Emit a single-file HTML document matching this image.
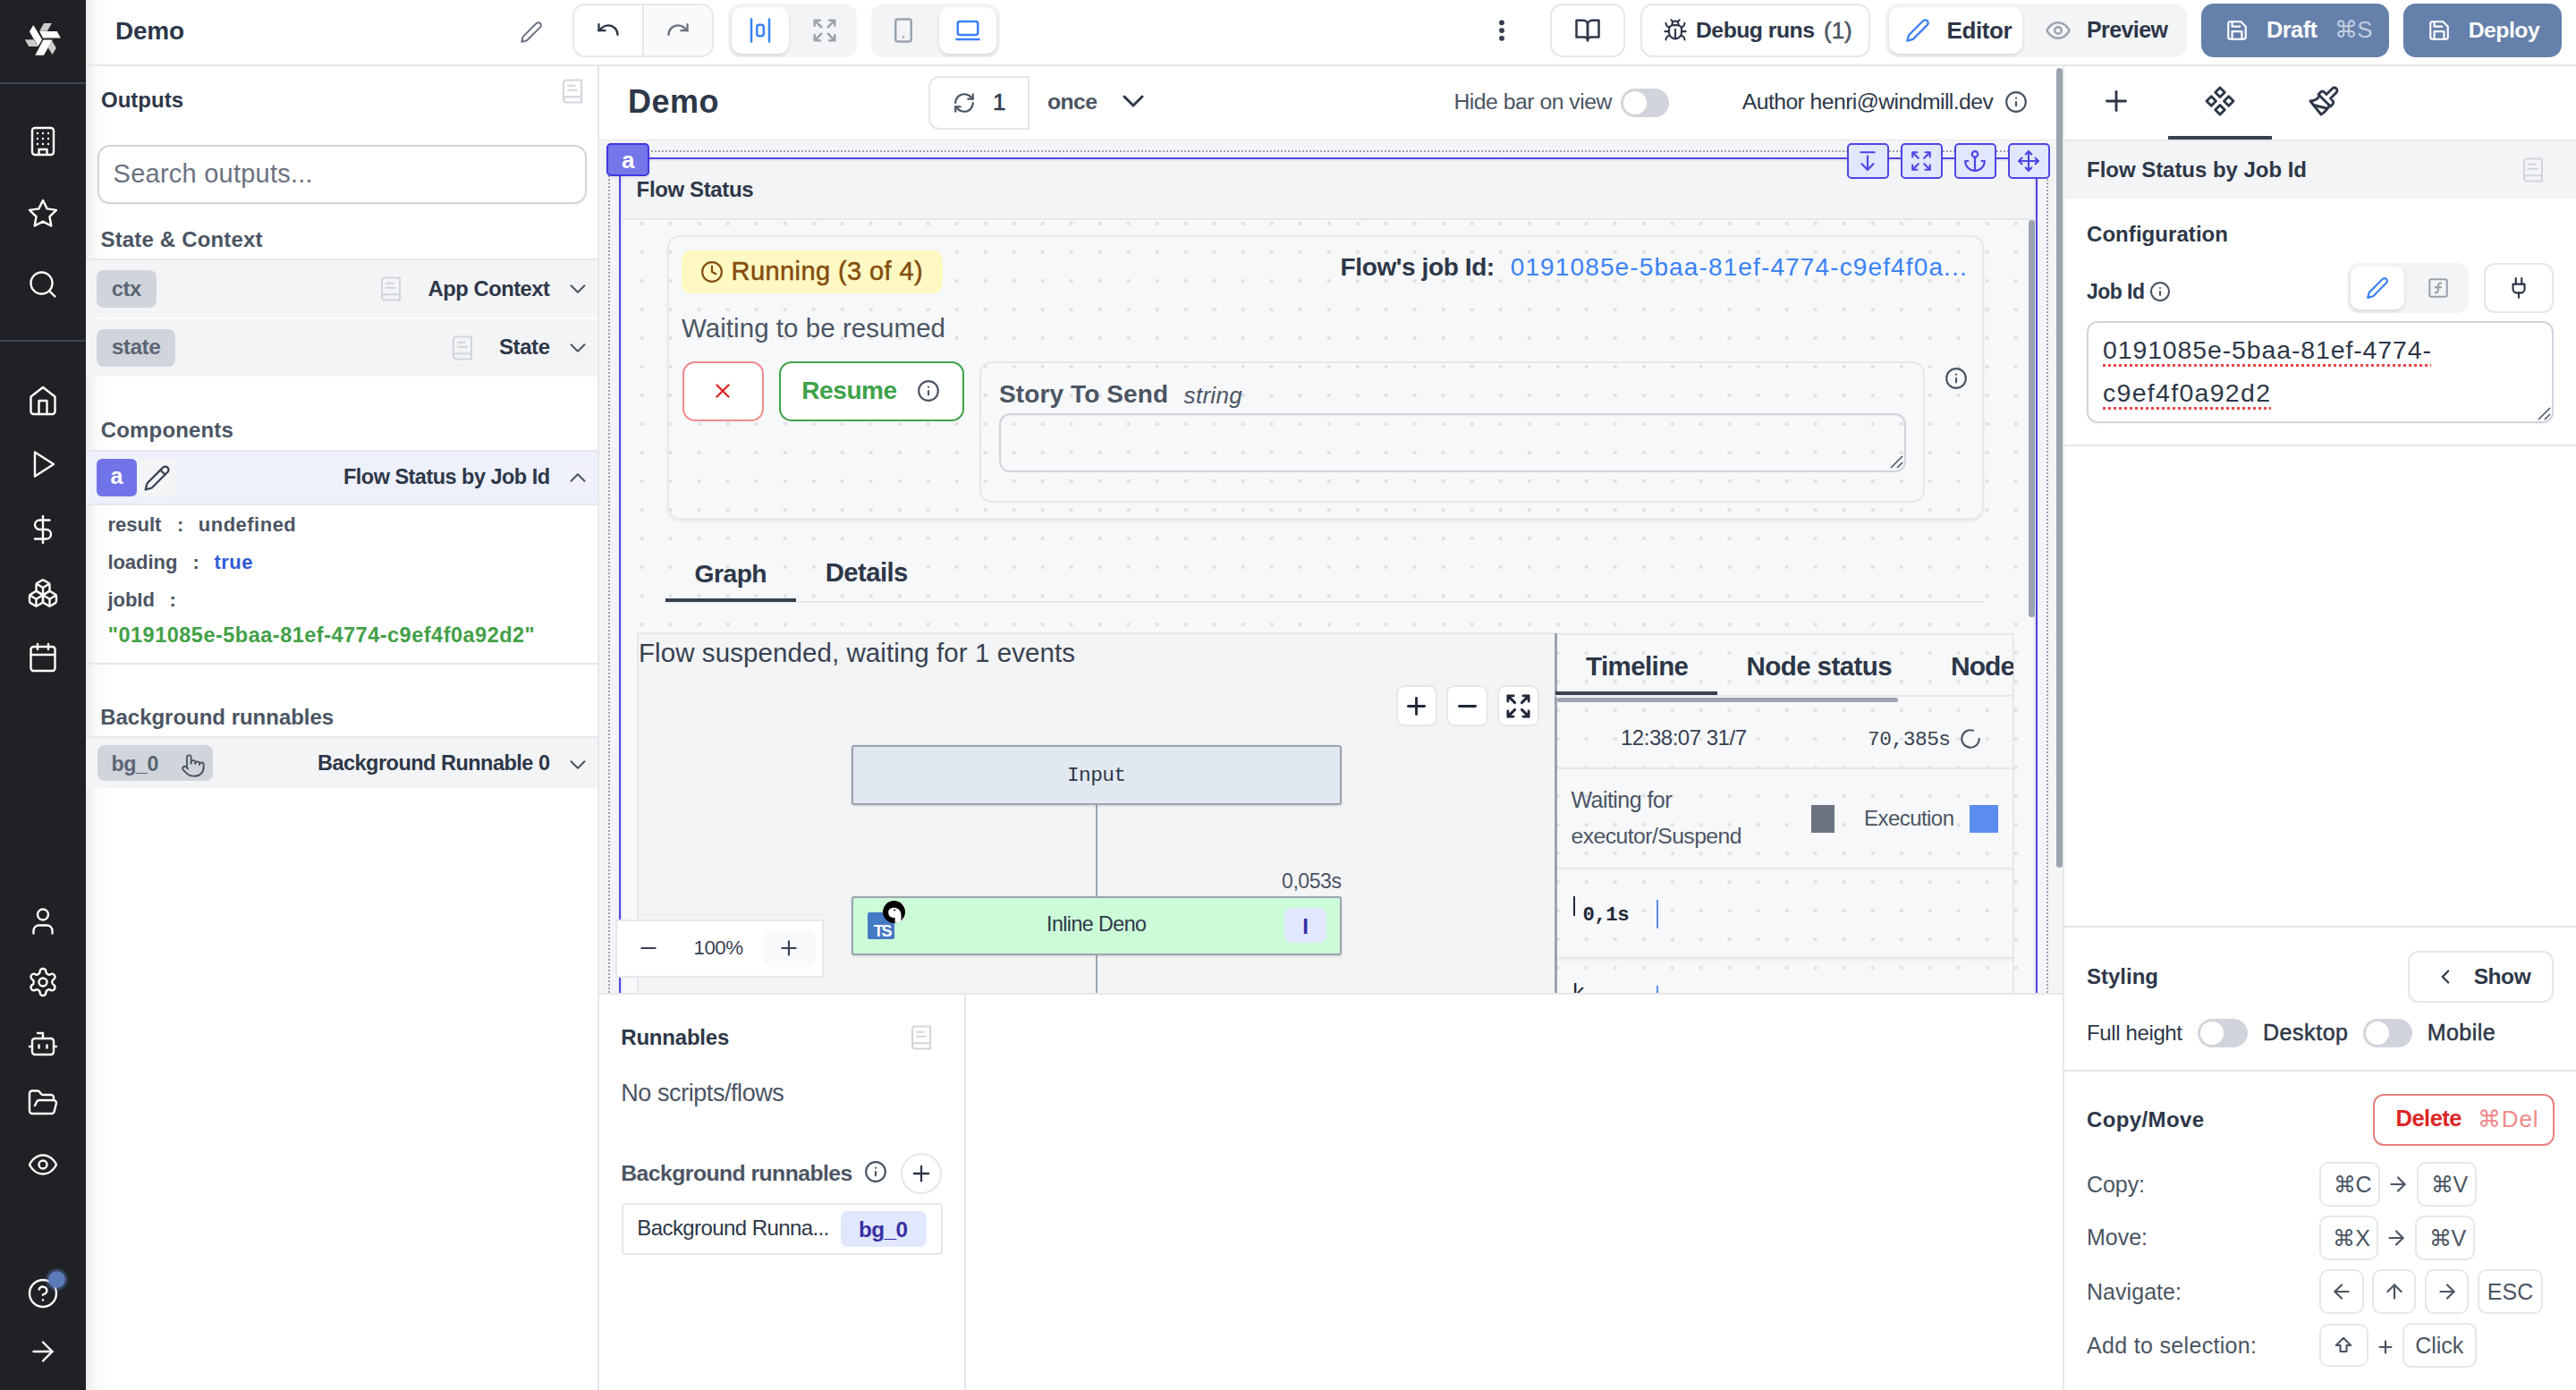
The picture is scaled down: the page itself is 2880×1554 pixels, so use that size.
<!DOCTYPE html><html><head><meta charset="utf-8"><style>
html,body{margin:0;padding:0;}
body{width:2880px;height:1554px;overflow:hidden;position:relative;background:#fff;font-family:"Liberation Sans",sans-serif;}
.t{position:absolute;white-space:nowrap;line-height:1;}
.b{position:absolute;box-sizing:border-box;}
.i{position:absolute;overflow:visible;}
</style></head><body>
<div class="b" style="left:0px;top:0px;width:96px;height:1554px;background:#202125;"></div>
<svg class="i" style="left:20px;top:16px" width="56" height="56" viewBox="0 0 1390 1390"><polygon fill="#fff" points="430,295 670,700 560,890 320,475"/><polygon fill="#ccc" points="195,700 440,700 555,895 305,895"/><polygon fill="#fff" points="600,470 1085,470 1190,660 695,660"/><polygon fill="#ccc" points="720,250 940,250 815,465 600,465"/><polygon fill="#fff" points="705,705 960,705 720,1135 480,1135"/><polygon fill="#ccc" points="945,735 1065,940 955,1115 835,925"/></svg>
<div class="b" style="left:0px;top:92px;width:96px;height:2px;background:#3b4456;"></div>
<div class="b" style="left:0px;top:380px;width:96px;height:2px;background:#3b4456;"></div>
<svg class="i" style="left:30.00px;top:140.00px;" width="36" height="36" viewBox="0 0 24 24" fill="none" stroke="#ffffff" stroke-width="1.6" stroke-linecap="round" stroke-linejoin="round"><rect width="16" height="20" x="4" y="2" rx="2" ry="2"/><path d="M9 22v-4h6v4"/><path d="M8 6h.01"/><path d="M16 6h.01"/><path d="M12 6h.01"/><path d="M12 10h.01"/><path d="M12 14h.01"/><path d="M16 10h.01"/><path d="M16 14h.01"/><path d="M8 10h.01"/><path d="M8 14h.01"/></svg>
<svg class="i" style="left:30.00px;top:220.50px;" width="36" height="36" viewBox="0 0 24 24" fill="none" stroke="#ffffff" stroke-width="1.6" stroke-linecap="round" stroke-linejoin="round"><polygon points="12 2 15.09 8.26 22 9.27 17 14.14 18.18 21.02 12 17.77 5.82 21.02 7 14.14 2 9.27 8.91 8.26 12 2"/></svg>
<svg class="i" style="left:30.00px;top:300.00px;" width="36" height="36" viewBox="0 0 24 24" fill="none" stroke="#ffffff" stroke-width="1.6" stroke-linecap="round" stroke-linejoin="round"><circle cx="11" cy="11" r="8"/><path d="m21 21-4.3-4.3"/></svg>
<svg class="i" style="left:30.00px;top:430.00px;" width="36" height="36" viewBox="0 0 24 24" fill="none" stroke="#ffffff" stroke-width="1.6" stroke-linecap="round" stroke-linejoin="round"><path d="m3 9 9-7 9 7v11a2 2 0 0 1-2 2H5a2 2 0 0 1-2-2z"/><polyline points="9 22 9 12 15 12 15 22"/></svg>
<svg class="i" style="left:30.00px;top:501.00px;" width="36" height="36" viewBox="0 0 24 24" fill="none" stroke="#ffffff" stroke-width="1.6" stroke-linecap="round" stroke-linejoin="round"><polygon points="6 3 20 12 6 21 6 3"/></svg>
<svg class="i" style="left:30.00px;top:573.50px;" width="36" height="36" viewBox="0 0 24 24" fill="none" stroke="#ffffff" stroke-width="1.6" stroke-linecap="round" stroke-linejoin="round"><line x1="12" x2="12" y1="2" y2="22"/><path d="M17 5H9.5a3.5 3.5 0 0 0 0 7h5a3.5 3.5 0 0 1 0 7H6"/></svg>
<svg class="i" style="left:30.00px;top:644.50px;" width="36" height="36" viewBox="0 0 24 24" fill="none" stroke="#ffffff" stroke-width="1.6" stroke-linecap="round" stroke-linejoin="round"><path d="M2.97 12.92A2 2 0 0 0 2 14.63v3.24a2 2 0 0 0 .97 1.71l3 1.8a2 2 0 0 0 2.06 0L12 19v-5.5l-5-3-4.03 2.42Z"/><path d="m7 16.5-4.74-2.85"/><path d="m7 16.5 5-3"/><path d="M7 16.5v5.17"/><path d="M12 13.5V19l3.97 2.38a2 2 0 0 0 2.06 0l3-1.8a2 2 0 0 0 .97-1.71v-3.24a2 2 0 0 0-.97-1.71L17 10.5l-5 3Z"/><path d="m17 16.5-5-3"/><path d="m17 16.5 4.74-2.85"/><path d="M17 16.5v5.17"/><path d="M7.970 4.42A2 2 0 0 0 7 6.13v4.37l5 3 5-3V6.13a2 2 0 0 0-.97-1.71l-3-1.8a2 2 0 0 0-2.06 0l-3 1.8Z"/><path d="M12 8 7.26 5.15"/><path d="m12 8 4.74-2.85"/><path d="M12 13.5V8"/></svg>
<svg class="i" style="left:30.00px;top:717.00px;" width="36" height="36" viewBox="0 0 24 24" fill="none" stroke="#ffffff" stroke-width="1.6" stroke-linecap="round" stroke-linejoin="round"><rect width="18" height="18" x="3" y="4" rx="2" ry="2"/><line x1="16" x2="16" y1="2" y2="6"/><line x1="8" x2="8" y1="2" y2="6"/><line x1="3" x2="21" y1="10" y2="10"/></svg>
<svg class="i" style="left:30.00px;top:1012.00px;" width="36" height="36" viewBox="0 0 24 24" fill="none" stroke="#ffffff" stroke-width="1.6" stroke-linecap="round" stroke-linejoin="round"><path d="M19 21v-2a4 4 0 0 0-4-4H9a4 4 0 0 0-4 4v2"/><circle cx="12" cy="7" r="4"/></svg>
<svg class="i" style="left:30.00px;top:1080.00px;" width="36" height="36" viewBox="0 0 24 24" fill="none" stroke="#ffffff" stroke-width="1.6" stroke-linecap="round" stroke-linejoin="round"><path d="M12.22 2h-.44a2 2 0 0 0-2 2v.18a2 2 0 0 1-1 1.73l-.43.25a2 2 0 0 1-2 0l-.15-.08a2 2 0 0 0-2.73.73l-.22.38a2 2 0 0 0 .73 2.73l.15.1a2 2 0 0 1 1 1.72v.51a2 2 0 0 1-1 1.74l-.15.09a2 2 0 0 0-.73 2.73l.22.38a2 2 0 0 0 2.73.73l.15-.08a2 2 0 0 1 2 0l.43.25a2 2 0 0 1 1 1.73V20a2 2 0 0 0 2 2h.44a2 2 0 0 0 2-2v-.18a2 2 0 0 1 1-1.73l.43-.25a2 2 0 0 1 2 0l.15.08a2 2 0 0 0 2.73-.73l.22-.39a2 2 0 0 0-.73-2.73l-.15-.08a2 2 0 0 1-1-1.74v-.5a2 2 0 0 1 1-1.74l.15-.09a2 2 0 0 0 .73-2.73l-.22-.38a2 2 0 0 0-2.73-.73l-.15.08a2 2 0 0 1-2 0l-.43-.25a2 2 0 0 1-1-1.73V4a2 2 0 0 0-2-2z"/><circle cx="12" cy="12" r="3"/></svg>
<svg class="i" style="left:30.00px;top:1149.00px;" width="36" height="36" viewBox="0 0 24 24" fill="none" stroke="#ffffff" stroke-width="1.6" stroke-linecap="round" stroke-linejoin="round"><path d="M12 8V4H8"/><rect width="16" height="12" x="4" y="8" rx="2"/><path d="M2 14h2"/><path d="M20 14h2"/><path d="M15 13v2"/><path d="M9 13v2"/></svg>
<svg class="i" style="left:30.00px;top:1215.00px;" width="36" height="36" viewBox="0 0 24 24" fill="none" stroke="#ffffff" stroke-width="1.6" stroke-linecap="round" stroke-linejoin="round"><path d="m6 14 1.45-2.9A2 2 0 0 1 9.24 10H20a2 2 0 0 1 1.94 2.5l-1.55 6a2 2 0 0 1-1.94 1.5H4a2 2 0 0 1-2-2V5c0-1.1.9-2 2-2h3.93a2 2 0 0 1 1.66.9l.82 1.2a2 2 0 0 0 1.66.9H18a2 2 0 0 1 2 2v2"/></svg>
<svg class="i" style="left:30.00px;top:1284.00px;" width="36" height="36" viewBox="0 0 24 24" fill="none" stroke="#ffffff" stroke-width="1.6" stroke-linecap="round" stroke-linejoin="round"><path d="M2 12s3-7 10-7 10 7 10 7-3 7-10 7-10-7-10-7Z"/><circle cx="12" cy="12" r="3"/></svg>
<svg class="i" style="left:30.00px;top:1428.00px;" width="36" height="36" viewBox="0 0 24 24" fill="none" stroke="#ffffff" stroke-width="1.6" stroke-linecap="round" stroke-linejoin="round"><circle cx="12" cy="12" r="10"/><path d="M9.09 9a3 3 0 0 1 5.83 1c0 2-3 3-3 3"/><path d="M12 17h.01"/></svg>
<svg class="i" style="left:30.00px;top:1492.50px;" width="36" height="36" viewBox="0 0 24 24" fill="none" stroke="#ffffff" stroke-width="1.6" stroke-linecap="round" stroke-linejoin="round"><path d="M5 12h14"/><path d="m12 5 7 7-7 7"/></svg>
<div class="b" style="left:54px;top:1421px;width:19px;height:19px;border-radius:50%;background:#5b7ab8;box-shadow:0 0 0 3px rgba(91,122,184,0.35)"></div>
<div class="b" style="left:96px;top:0px;width:2784px;height:72px;background:#fff;"></div>
<div class="b" style="left:96px;top:72px;width:2784px;height:2px;background:#e5e7eb;"></div>
<div class="b" style="left:96px;top:0px;width:34px;height:72px;background:linear-gradient(to right, rgba(0,0,0,0.075), rgba(0,0,0,0.02) 12px, rgba(0,0,0,0) 30px);"></div>
<div class="t" style="left:129.00px;top:20.59px;font-size:28px;font-weight:700;color:#2d3748;font-family:'Liberation Sans', sans-serif;letter-spacing:-0.265px;">Demo</div>
<svg class="i" style="left:581.00px;top:23.00px;" width="26" height="26" viewBox="0 0 24 24" fill="none" stroke="#6b7280" stroke-width="1.8" stroke-linecap="round" stroke-linejoin="round"><path d="M17 3a2.85 2.83 0 1 1 4 4L7.5 20.5 2 22l1.5-5.5Z"/></svg>
<div class="b" style="left:640px;top:4px;width:158px;height:60px;background:#fff;border:2px solid #e5e7eb;border-radius:14px;overflow:hidden"></div>
<div class="b" style="left:719px;top:6px;width:77px;height:56px;background:#f9fafb;border-top-right-radius:12px;border-bottom-right-radius:12px"></div>
<div class="b" style="left:718px;top:4px;width:2px;height:60px;background:#e5e7eb;"></div>
<svg class="i" style="left:666.00px;top:19.00px;" width="28" height="28" viewBox="0 0 24 24" fill="none" stroke="#2d3748" stroke-width="2" stroke-linecap="round" stroke-linejoin="round"><path d="M3 7v6h6"/><path d="M21 17a9 9 0 0 0-9-9 9 9 0 0 0-6 2.3L3 13"/></svg>
<svg class="i" style="left:744.00px;top:19.00px;" width="28" height="28" viewBox="0 0 24 24" fill="none" stroke="#6b7280" stroke-width="2" stroke-linecap="round" stroke-linejoin="round"><path d="M21 7v6h-6"/><path d="M3 17a9 9 0 0 1 9-9 9 9 0 0 1 6 2.3l3 2.7"/></svg>
<div class="b" style="left:814px;top:4px;width:144px;height:60px;background:#f3f4f6;border-radius:14px;"></div>
<div class="b" style="left:818px;top:8px;width:64px;height:52px;background:#fff;border-radius:12px;box-shadow:0 2px 4px rgba(0,0,0,0.12)"></div>
<svg class="i" style="left:835.00px;top:19.00px;" width="30" height="30" viewBox="0 0 24 24" fill="none" stroke="#3b82f6" stroke-width="2" stroke-linecap="round" stroke-linejoin="round"><rect width="6" height="10" x="9" y="7" rx="2"/><path d="M4 22V2"/><path d="M20 22V2"/></svg>
<svg class="i" style="left:907.00px;top:19.00px;" width="30" height="30" viewBox="0 0 24 24" fill="none" stroke="#9ca3af" stroke-width="2" stroke-linecap="round" stroke-linejoin="round"><path d="m21 21-6-6m6 6v-4.8m0 4.8h-4.8"/><path d="M3 16.2V21m0 0h4.8M3 21l6-6"/><path d="M21 7.8V3m0 0h-4.8M21 3l-6 6"/><path d="M3 7.8V3m0 0h4.8M3 3l6 6"/></svg>
<div class="b" style="left:974px;top:4px;width:144px;height:60px;background:#f3f4f6;border-radius:14px;"></div>
<div class="b" style="left:1050px;top:8px;width:64px;height:52px;background:#fff;border-radius:12px;box-shadow:0 2px 4px rgba(0,0,0,0.12)"></div>
<svg class="i" style="left:995.00px;top:19.00px;" width="30" height="30" viewBox="0 0 24 24" fill="none" stroke="#9ca3af" stroke-width="2" stroke-linecap="round" stroke-linejoin="round"><rect width="14" height="20" x="5" y="2" rx="2" ry="2"/><path d="M12 18h.01"/></svg>
<svg class="i" style="left:1067.00px;top:19.00px;" width="30" height="30" viewBox="0 0 24 24" fill="none" stroke="#3b82f6" stroke-width="2" stroke-linecap="round" stroke-linejoin="round"><rect width="18" height="12" x="3" y="4" rx="2" ry="2"/><line x1="2" x2="22" y1="20" y2="20"/></svg>
<svg class="i" style="left:1664.00px;top:19.00px;" width="30" height="30" viewBox="0 0 24 24" fill="none" stroke="#2d3748" stroke-width="2.6" stroke-linecap="round" stroke-linejoin="round"><circle cx="12" cy="12" r="1"/><circle cx="12" cy="5" r="1"/><circle cx="12" cy="19" r="1"/></svg>
<div class="b" style="left:1733px;top:4px;width:84px;height:60px;background:#fff;border:2px solid #e5e7eb;border-radius:14px;"></div>
<svg class="i" style="left:1760.00px;top:19.00px;" width="30" height="30" viewBox="0 0 24 24" fill="none" stroke="#2d3748" stroke-width="2" stroke-linecap="round" stroke-linejoin="round"><path d="M2 3h6a4 4 0 0 1 4 4v14a3 3 0 0 0-3-3H2z"/><path d="M22 3h-6a4 4 0 0 0-4 4v14a3 3 0 0 1 3-3h7z"/></svg>
<div class="b" style="left:1834px;top:4px;width:257px;height:60px;background:#fff;border:2px solid #e5e7eb;border-radius:14px;"></div>
<svg class="i" style="left:1859.00px;top:20.00px;" width="28" height="28" viewBox="0 0 24 24" fill="none" stroke="#2d3748" stroke-width="1.8" stroke-linecap="round" stroke-linejoin="round"><path d="m8 2 1.88 1.88"/><path d="M14.12 3.88 16 2"/><path d="M9 7.13v-1a3.003 3.003 0 1 1 6 0v1"/><path d="M12 20c-3.3 0-6-2.7-6-6v-3a4 4 0 0 1 4-4h4a4 4 0 0 1 4 4v3c0 3.3-2.7 6-6 6"/><path d="M12 20v-9"/><path d="M6.53 9C4.6 8.8 3 7.1 3 5"/><path d="M6 13H2"/><path d="M3 21c0-2.1 1.7-3.9 3.8-4"/><path d="M20.97 5c0 2.1-1.6 3.8-3.5 4"/><path d="M22 13h-4"/><path d="M17.2 17c2.1.1 3.8 1.9 3.8 4"/></svg>
<div class="t" style="left:1896.00px;top:21.64px;font-size:24.75px;font-weight:700;color:#2d3748;font-family:'Liberation Sans', sans-serif;letter-spacing:-0.501px;">Debug runs</div>
<div class="t" style="left:2039.00px;top:20.59px;font-size:26px;font-weight:400;color:#4b5563;font-family:'Liberation Sans', sans-serif;-webkit-text-stroke:0.5px currentColor;">(1)</div>
<div class="b" style="left:2108px;top:4px;width:337px;height:60px;background:#f3f4f6;border-radius:14px;"></div>
<div class="b" style="left:2112px;top:8px;width:149px;height:52px;background:#fff;border-radius:12px;box-shadow:0 2px 4px rgba(0,0,0,0.12)"></div>
<svg class="i" style="left:2130.00px;top:20.00px;" width="28" height="28" viewBox="0 0 24 24" fill="none" stroke="#3b82f6" stroke-width="2" stroke-linecap="round" stroke-linejoin="round"><path d="M17 3a2.85 2.83 0 1 1 4 4L7.5 20.5 2 22l1.5-5.5Z"/></svg>
<div class="t" style="left:2176.50px;top:20.59px;font-size:26px;font-weight:700;color:#2d3748;font-family:'Liberation Sans', sans-serif;letter-spacing:-0.422px;">Editor</div>
<svg class="i" style="left:2285.50px;top:19.00px;" width="30" height="30" viewBox="0 0 24 24" fill="none" stroke="#9ca3af" stroke-width="2" stroke-linecap="round" stroke-linejoin="round"><path d="M2 12s3-7 10-7 10 7 10 7-3 7-10 7-10-7-10-7Z"/><circle cx="12" cy="12" r="3"/></svg>
<div class="t" style="left:2333.00px;top:21.43px;font-size:25.0px;font-weight:700;color:#2d3748;font-family:'Liberation Sans', sans-serif;letter-spacing:-0.585px;">Preview</div>
<div class="b" style="left:2461px;top:4px;width:210px;height:60px;background:#6580ab;border-radius:14px;"></div>
<svg class="i" style="left:2488.00px;top:21.00px;" width="26" height="26" viewBox="0 0 24 24" fill="none" stroke="#ffffff" stroke-width="2" stroke-linecap="round" stroke-linejoin="round"><path d="M19 21H5a2 2 0 0 1-2-2V5a2 2 0 0 1 2-2h11l5 5v11a2 2 0 0 1-2 2z"/><polyline points="17 21 17 13 7 13 7 21"/><polyline points="7 3 7 8 15 8"/></svg>
<div class="t" style="left:2534.00px;top:21.22px;font-size:25.25px;font-weight:700;color:#fff;font-family:'Liberation Sans', sans-serif;letter-spacing:-0.481px;">Draft</div>
<div class="t" style="left:2609.70px;top:20.80px;font-size:25.75px;font-weight:400;color:#c3cde0;font-family:'Liberation Sans', sans-serif;letter-spacing:-0.489px;">⌘S</div>
<div class="b" style="left:2687px;top:4px;width:177px;height:60px;background:#6580ab;border-radius:14px;"></div>
<svg class="i" style="left:2713.50px;top:21.00px;" width="26" height="26" viewBox="0 0 24 24" fill="none" stroke="#ffffff" stroke-width="2" stroke-linecap="round" stroke-linejoin="round"><path d="M19 21H5a2 2 0 0 1-2-2V5a2 2 0 0 1 2-2h11l5 5v11a2 2 0 0 1-2 2z"/><polyline points="17 21 17 13 7 13 7 21"/><polyline points="7 3 7 8 15 8"/></svg>
<div class="t" style="left:2759.70px;top:21.64px;font-size:24.75px;font-weight:700;color:#fff;font-family:'Liberation Sans', sans-serif;letter-spacing:-0.504px;">Deploy</div>
<div class="b" style="left:96px;top:74px;width:572px;height:1480px;background:#fff;"></div>
<div class="b" style="left:668px;top:74px;width:2px;height:1480px;background:#e5e7eb;"></div>
<div class="b" style="left:96px;top:74px;width:34px;height:1480px;background:linear-gradient(to right, rgba(0,0,0,0.075), rgba(0,0,0,0.02) 12px, rgba(0,0,0,0) 30px);"></div>
<div class="t" style="left:113.00px;top:99.68px;font-size:24px;font-weight:700;color:#2d3748;font-family:'Liberation Sans', sans-serif;letter-spacing:0.003px;">Outputs</div>
<svg class="i" style="left:625.00px;top:87.00px;" width="30" height="30" viewBox="0 0 24 24" fill="none" stroke="#d1d5db" stroke-width="1.6" stroke-linecap="round" stroke-linejoin="round"><path d="M4 19.5v-15A2.5 2.5 0 0 1 6.5 2H20v20H6.5a2.5 2.5 0 0 1 0-5H20"/><path d="M8 7h6"/><path d="M8 11h8"/></svg>
<div class="b" style="left:109px;top:161.5px;width:547px;height:66.5px;background:#fff;border:2px solid #d1d5db;border-radius:14px;box-shadow:0 1px 3px rgba(0,0,0,0.06)"></div>
<div class="t" style="left:126.60px;top:180.45px;font-size:29px;font-weight:400;color:#6b7280;font-family:'Liberation Sans', sans-serif;letter-spacing:0.235px;">Search outputs...</div>
<div class="t" style="left:112.50px;top:255.68px;font-size:24px;font-weight:700;color:#4b5563;font-family:'Liberation Sans', sans-serif;letter-spacing:0.165px;">State &amp; Context</div>
<div class="b" style="left:96px;top:289px;width:572px;height:2px;background:#e5e7eb;"></div>
<div class="b" style="left:96px;top:291px;width:572px;height:64px;background:#f3f4f6;"></div>
<div class="b" style="left:96px;top:357px;width:572px;height:64px;background:#f3f4f6;"></div>
<div class="b" style="left:108px;top:302px;width:67px;height:42px;background:#d1d5db;border-radius:8px;"></div>
<div class="t" style="left:124.80px;top:310.59px;font-size:23.75px;font-weight:700;color:#5b6575;font-family:'Liberation Sans', sans-serif;letter-spacing:-0.464px;">ctx</div>
<svg class="i" style="left:422.00px;top:307.50px;" width="30" height="30" viewBox="0 0 24 24" fill="none" stroke="#d1d5db" stroke-width="1.6" stroke-linecap="round" stroke-linejoin="round"><path d="M4 19.5v-15A2.5 2.5 0 0 1 6.5 2H20v20H6.5a2.5 2.5 0 0 1 0-5H20"/><path d="M8 7h6"/><path d="M8 11h8"/></svg>
<div class="t" style="left:478.60px;top:310.69px;font-size:23.75px;font-weight:700;color:#2d3748;font-family:'Liberation Sans', sans-serif;letter-spacing:-0.477px;">App Context</div>
<svg class="i" style="left:631.00px;top:307.70px;" width="30" height="30" viewBox="0 0 24 24" fill="none" stroke="#4b5563" stroke-width="1.6" stroke-linecap="round" stroke-linejoin="round"><path d="m6 9 6 6 6-6"/></svg>
<div class="b" style="left:108px;top:368px;width:88px;height:42px;background:#d1d5db;border-radius:8px;"></div>
<div class="t" style="left:124.80px;top:376.26px;font-size:24.5px;font-weight:700;color:#5b6575;font-family:'Liberation Sans', sans-serif;letter-spacing:-0.549px;">state</div>
<svg class="i" style="left:502.00px;top:374.00px;" width="30" height="30" viewBox="0 0 24 24" fill="none" stroke="#d1d5db" stroke-width="1.6" stroke-linecap="round" stroke-linejoin="round"><path d="M4 19.5v-15A2.5 2.5 0 0 1 6.5 2H20v20H6.5a2.5 2.5 0 0 1 0-5H20"/><path d="M8 7h6"/><path d="M8 11h8"/></svg>
<div class="t" style="left:558.00px;top:376.48px;font-size:24px;font-weight:700;color:#2d3748;font-family:'Liberation Sans', sans-serif;letter-spacing:-0.423px;">State</div>
<svg class="i" style="left:631.00px;top:374.00px;" width="30" height="30" viewBox="0 0 24 24" fill="none" stroke="#4b5563" stroke-width="1.6" stroke-linecap="round" stroke-linejoin="round"><path d="m6 9 6 6 6-6"/></svg>
<div class="t" style="left:112.80px;top:469.48px;font-size:24px;font-weight:700;color:#4b5563;font-family:'Liberation Sans', sans-serif;letter-spacing:0.148px;">Components</div>
<div class="b" style="left:96px;top:503px;width:572px;height:2px;background:#e5e7eb;"></div>
<div class="b" style="left:96px;top:505px;width:572px;height:58px;background:#eef0fc;"></div>
<div class="b" style="left:96px;top:563px;width:572px;height:2px;background:#e5e7eb;"></div>
<div class="b" style="left:108px;top:513px;width:45px;height:42px;background:#7174e8;border-radius:6px;"></div>
<div class="t" style="left:123.50px;top:520.13px;font-size:25px;font-weight:700;color:#fff;font-family:'Liberation Sans', sans-serif;">a</div>
<div class="b" style="left:153px;top:513px;width:43.5px;height:42px;background:#f3f4f6;border-top-right-radius:6px;border-bottom-right-radius:6px"></div>
<svg class="i" style="left:159.50px;top:518.50px;" width="31" height="31" viewBox="0 0 24 24" fill="none" stroke="#374151" stroke-width="1.7" stroke-linecap="round" stroke-linejoin="round"><path d="M17 3a2.85 2.83 0 1 1 4 4L7.5 20.5 2 22l1.5-5.5Z"/><path d="m15 5 4 4"/></svg>
<div class="t" style="left:384.00px;top:522.00px;font-size:23.5px;font-weight:700;color:#2d3748;font-family:'Liberation Sans', sans-serif;letter-spacing:-0.527px;">Flow Status by Job Id</div>
<div class="b" style="left:632px;top:519px;width:28px;height:30px;background:#f3f4f6;border-radius:6px;opacity:0.6"></div>
<svg class="i" style="left:631.00px;top:519.00px;" width="30" height="30" viewBox="0 0 24 24" fill="none" stroke="#4b5563" stroke-width="1.6" stroke-linecap="round" stroke-linejoin="round"><path d="m18 15-6-6-6 6"/></svg>
<div class="t" style="left:120.40px;top:575.67px;font-size:22px;font-weight:700;color:#4b5563;font-family:'Liberation Sans', sans-serif;letter-spacing:0.018px;">result</div>
<div class="t" style="left:198.00px;top:575.67px;font-size:22px;font-weight:700;color:#4b5563;font-family:'Liberation Sans', sans-serif;">:</div>
<div class="t" style="left:221.80px;top:575.67px;font-size:22px;font-weight:700;color:#4b5563;font-family:'Liberation Sans', sans-serif;letter-spacing:0.487px;">undefined</div>
<div class="t" style="left:120.40px;top:617.97px;font-size:22px;font-weight:700;color:#4b5563;font-family:'Liberation Sans', sans-serif;letter-spacing:-0.036px;">loading</div>
<div class="t" style="left:215.60px;top:617.97px;font-size:22px;font-weight:700;color:#4b5563;font-family:'Liberation Sans', sans-serif;">:</div>
<div class="t" style="left:239.50px;top:617.97px;font-size:22px;font-weight:700;color:#2f5bd9;font-family:'Liberation Sans', sans-serif;letter-spacing:0.479px;">true</div>
<div class="t" style="left:120.40px;top:659.77px;font-size:22px;font-weight:700;color:#4b5563;font-family:'Liberation Sans', sans-serif;letter-spacing:-0.010px;">jobId</div>
<div class="t" style="left:189.50px;top:659.77px;font-size:22px;font-weight:700;color:#4b5563;font-family:'Liberation Sans', sans-serif;">:</div>
<div class="t" style="left:120.80px;top:699.10px;font-size:23.5px;font-weight:700;color:#43a047;font-family:'Liberation Sans', sans-serif;letter-spacing:0.495px;">"0191085e-5baa-81ef-4774-c9ef4f0a92d2"</div>
<div class="b" style="left:96px;top:741px;width:572px;height:2px;background:#e5e7eb;"></div>
<div class="t" style="left:112.20px;top:789.68px;font-size:24px;font-weight:700;color:#4b5563;font-family:'Liberation Sans', sans-serif;letter-spacing:-0.020px;">Background runnables</div>
<div class="b" style="left:96px;top:823px;width:572px;height:2px;background:#e5e7eb;"></div>
<div class="b" style="left:96px;top:825px;width:572px;height:56px;background:#f3f4f6;"></div>
<div class="b" style="left:108.5px;top:833px;width:129.0px;height:40px;background:#d1d5db;border-radius:8px;"></div>
<div class="t" style="left:124.50px;top:842.81px;font-size:23.25px;font-weight:700;color:#5b6575;font-family:'Liberation Sans', sans-serif;letter-spacing:-0.422px;">bg_0</div>
<svg class="i" style="left:202.00px;top:842.00px;" width="28" height="28" viewBox="0 0 24 24" fill="none" stroke="#4b5563" stroke-width="1.6" stroke-linecap="round" stroke-linejoin="round"><path d="M22 14a8 8 0 0 1-8 8"/><path d="M18 11v-1a2 2 0 0 0-2-2a2 2 0 0 0-2 2"/><path d="M14 10V9a2 2 0 0 0-2-2a2 2 0 0 0-2 2v1"/><path d="M10 9.5V4a2 2 0 0 0-2-2a2 2 0 0 0-2 2v10"/><path d="M18 11a2 2 0 1 1 4 0v3a8 8 0 0 1-8 8h-2c-2.8 0-4.5-.86-5.99-2.34l-3.6-3.6a2 2 0 0 1 2.83-2.82L7 15"/></svg>
<div class="t" style="left:355.00px;top:842.10px;font-size:23.5px;font-weight:700;color:#2d3748;font-family:'Liberation Sans', sans-serif;letter-spacing:-0.515px;">Background Runnable 0</div>
<svg class="i" style="left:631.00px;top:840.00px;" width="30" height="30" viewBox="0 0 24 24" fill="none" stroke="#4b5563" stroke-width="1.6" stroke-linecap="round" stroke-linejoin="round"><path d="m6 9 6 6 6-6"/></svg>
<div class="b" style="left:670px;top:74px;width:1636px;height:82px;background:#fff;"></div>
<div class="b" style="left:670px;top:156px;width:1636px;height:2px;background:#e5e7eb;"></div>
<div class="b" style="left:670px;top:157px;width:1636px;height:953px;background:#f3f4f6;"></div>
<div class="t" style="left:702.00px;top:96.12px;font-size:36px;font-weight:700;color:#2d3748;font-family:'Liberation Sans', sans-serif;letter-spacing:0.493px;">Demo</div>
<div class="b" style="left:1038px;top:85px;width:113px;height:59.5px;border:2px solid #e5e7eb;border-radius:12px 0 0 12px;background:#fff"></div>
<svg class="i" style="left:1065.00px;top:102.00px;" width="26" height="26" viewBox="0 0 24 24" fill="none" stroke="#4b5563" stroke-width="2" stroke-linecap="round" stroke-linejoin="round"><path d="M3 12a9 9 0 0 1 9-9 9.75 9.75 0 0 1 6.74 2.74L21 8"/><path d="M21 3v5h-5"/><path d="M21 12a9 9 0 0 1-9 9 9.75 9.75 0 0 1-6.74-2.74L3 16"/><path d="M8 16H3v5"/></svg>
<div class="t" style="left:1110.00px;top:100.99px;font-size:26px;font-weight:400;color:#2d3748;font-family:'Liberation Sans', sans-serif;-webkit-text-stroke:0.5px currentColor;">1</div>
<div class="t" style="left:1171.00px;top:102.04px;font-size:24.75px;font-weight:700;color:#4b5563;font-family:'Liberation Sans', sans-serif;letter-spacing:-0.589px;">once</div>
<svg class="i" style="left:1246.50px;top:93.00px;" width="40" height="40" viewBox="0 0 24 24" fill="none" stroke="#2d3748" stroke-width="1.8" stroke-linecap="round" stroke-linejoin="round"><path d="m6 9 6 6 6-6"/></svg>
<div class="t" style="left:1625.40px;top:102.44px;font-size:24.75px;font-weight:400;color:#4b5563;font-family:'Liberation Sans', sans-serif;letter-spacing:-0.490px;">Hide bar on view</div>
<div class="b" style="left:1812px;top:99px;width:54px;height:32px;background:#d1d5db;border-radius:16px;"></div>
<div class="b" style="left:1815px;top:102px;width:26px;height:26px;border-radius:50%;background:#fff"></div>
<div class="t" style="left:1947.80px;top:102.44px;font-size:24.75px;font-weight:400;color:#2d3748;font-family:'Liberation Sans', sans-serif;letter-spacing:-0.573px;">Author henri@windmill.dev</div>
<svg class="i" style="left:2241.00px;top:101.00px;" width="26" height="26" viewBox="0 0 24 24" fill="none" stroke="#4b5563" stroke-width="2" stroke-linecap="round" stroke-linejoin="round"><circle cx="12" cy="12" r="10"/><path d="M12 16v-4"/><path d="M12 8h.01"/></svg>
<div class="b" style="left:2299px;top:76px;width:7px;height:894px;background:#9ca3af;border-radius:4px;"></div>
<div class="b" style="left:694px;top:178px;width:1582px;height:932px;background:#f3f4f6;"></div>
<div class="b" style="left:694px;top:246px;width:1582px;height:864px;background-color:#f7f8fa;background-image:radial-gradient(circle, #e0e1e4 2px, transparent 2.3px);background-size:32px 32px;background-position:7.7px -12px"></div>
<div class="b" style="left:694px;top:244px;width:1582px;height:2px;background:#e5e7eb;"></div>
<div class="b" style="left:694px;top:178px;width:1582px;height:2px;background:#e5e7eb;"></div>
<div class="b" style="left:694px;top:178px;width:2px;height:932px;background:#e5e7eb;"></div>
<div class="b" style="left:2274px;top:178px;width:2px;height:932px;background:#e5e7eb;"></div>
<div class="t" style="left:711.60px;top:199.98px;font-size:24px;font-weight:700;color:#2d3748;font-family:'Liberation Sans', sans-serif;letter-spacing:-0.368px;">Flow Status</div>
<div class="b" style="left:692px;top:176px;width:1586px;height:2px;background:#4f46e5;"></div>
<div class="b" style="left:692px;top:176px;width:2px;height:934px;background:#4f46e5;"></div>
<div class="b" style="left:2276px;top:176px;width:2px;height:934px;background:#4f46e5;"></div>
<div class="b" style="left:680px;top:168px;width:1610px;height:942px;border:2px dotted #9ca3af;border-bottom:none"></div>
<div class="b" style="left:678px;top:160px;width:48px;height:36.5px;background:#7576e9;border:2px solid #4338e0;border-radius:5px;box-shadow:0 2px 4px rgba(0,0,0,0.08)"></div>
<div class="t" style="left:695.00px;top:165.99px;font-size:26px;font-weight:700;color:#fff;font-family:'Liberation Sans', sans-serif;">a</div>
<div class="b" style="left:2064.5px;top:160px;width:47.5px;height:40px;background:#e0e7ff;border:2px solid #4f46e5;border-radius:5px;"></div>
<svg class="i" style="left:2075.00px;top:167.00px;" width="26" height="26" viewBox="0 0 24 24" fill="none" stroke="#4f46e5" stroke-width="2" stroke-linecap="round" stroke-linejoin="round"><path d="M19 3H5"/><path d="M12 21V7"/><path d="m6 15 6 6 6-6"/></svg>
<div class="b" style="left:2124.5px;top:160px;width:47.5px;height:40px;background:#e0e7ff;border:2px solid #4f46e5;border-radius:5px;"></div>
<svg class="i" style="left:2135.00px;top:167.00px;" width="26" height="26" viewBox="0 0 24 24" fill="none" stroke="#4f46e5" stroke-width="2" stroke-linecap="round" stroke-linejoin="round"><path d="m21 21-6-6m6 6v-4.8m0 4.8h-4.8"/><path d="M3 16.2V21m0 0h4.8M3 21l6-6"/><path d="M21 7.8V3m0 0h-4.8M21 3l-6 6"/><path d="M3 7.8V3m0 0h4.8M3 3l6 6"/></svg>
<div class="b" style="left:2184.5px;top:160px;width:47.5px;height:40px;background:#e0e7ff;border:2px solid #4f46e5;border-radius:5px;"></div>
<svg class="i" style="left:2195.00px;top:167.00px;" width="26" height="26" viewBox="0 0 24 24" fill="none" stroke="#4f46e5" stroke-width="2" stroke-linecap="round" stroke-linejoin="round"><circle cx="12" cy="5" r="3"/><line x1="12" x2="12" y1="22" y2="8"/><path d="M5 12H2a10 10 0 0 0 20 0h-3"/></svg>
<div class="b" style="left:2244.5px;top:160px;width:47.5px;height:40px;background:#e0e7ff;border:2px solid #4f46e5;border-radius:5px;"></div>
<svg class="i" style="left:2255.00px;top:167.00px;" width="26" height="26" viewBox="0 0 24 24" fill="none" stroke="#4f46e5" stroke-width="2" stroke-linecap="round" stroke-linejoin="round"><polyline points="5 9 2 12 5 15"/><polyline points="9 5 12 2 15 5"/><polyline points="15 19 12 22 9 19"/><polyline points="19 9 22 12 19 15"/><line x1="2" x2="22" y1="12" y2="12"/><line x1="12" x2="12" y1="2" y2="22"/></svg>
<div class="b" style="left:2268px;top:246px;width:7px;height:444px;background:#9ca3af;border-radius:4px;"></div>
<div class="b" style="left:745.5px;top:262.5px;width:1472.0px;height:318.0px;background:transparent;border:2px solid #e5e7eb;border-radius:14px;box-shadow:0 2px 3px rgba(0,0,0,0.06)"></div>
<div class="b" style="left:762px;top:280px;width:292px;height:48px;background:#fef9c3;border-radius:10px;"></div>
<svg class="i" style="left:782.50px;top:291.00px;" width="26" height="26" viewBox="0 0 24 24" fill="none" stroke="#854d0e" stroke-width="2" stroke-linecap="round" stroke-linejoin="round"><circle cx="12" cy="12" r="10"/><polyline points="12 6 12 12 16 14"/></svg>
<div class="t" style="left:817.60px;top:289.45px;font-size:29px;font-weight:400;color:#854d0e;font-family:'Liberation Sans', sans-serif;letter-spacing:0.403px;-webkit-text-stroke:0.5px currentColor;">Running (3 of 4)</div>
<div class="t" style="left:1498.60px;top:285.29px;font-size:28px;font-weight:700;color:#2d3748;font-family:'Liberation Sans', sans-serif;letter-spacing:-0.396px;">Flow's job Id:</div>
<div class="t" style="left:1688.70px;top:285.29px;font-size:28px;font-weight:400;color:#3b82f6;font-family:'Liberation Sans', sans-serif;letter-spacing:1.126px;">0191085e-5baa-81ef-4774-c9ef4f0a...</div>
<div class="t" style="left:762.00px;top:351.72px;font-size:29.5px;font-weight:400;color:#4b5563;font-family:'Liberation Sans', sans-serif;letter-spacing:0.047px;">Waiting to be resumed</div>
<div class="b" style="left:762.5px;top:404px;width:91.0px;height:66.5px;background:#fff;border:2px solid #f08a8a;border-radius:14px;"></div>
<svg class="i" style="left:795.00px;top:424.00px;" width="26" height="26" viewBox="0 0 24 24" fill="none" stroke="#dc2626" stroke-width="2.2" stroke-linecap="round" stroke-linejoin="round"><path d="M18 6 6 18"/><path d="m6 6 12 12"/></svg>
<div class="b" style="left:870.5px;top:404px;width:207.0px;height:66.5px;background:#fff;border:2px solid #3ea24a;border-radius:14px;"></div>
<div class="t" style="left:896.20px;top:422.79px;font-size:28px;font-weight:700;color:#3ea24a;font-family:'Liberation Sans', sans-serif;letter-spacing:-0.388px;">Resume</div>
<svg class="i" style="left:1024.80px;top:424.00px;" width="26" height="26" viewBox="0 0 24 24" fill="none" stroke="#4b5563" stroke-width="2" stroke-linecap="round" stroke-linejoin="round"><circle cx="12" cy="12" r="10"/><path d="M12 16v-4"/><path d="M12 8h.01"/></svg>
<div class="b" style="left:1094.5px;top:404px;width:1057.5px;height:158px;background:transparent;border:2px solid #e5e7eb;border-radius:14px;"></div>
<div class="t" style="left:1117.00px;top:427.29px;font-size:28px;font-weight:700;color:#4b5563;font-family:'Liberation Sans', sans-serif;letter-spacing:0.107px;">Story To Send</div>
<div class="t" style="left:1323.60px;top:428.99px;font-size:26px;font-weight:400;color:#4b5563;font-family:'Liberation Sans', sans-serif;letter-spacing:0.284px;font-style:italic;">string</div>
<div class="b" style="left:1116.5px;top:462px;width:1014.5px;height:65.5px;background:transparent;border:2px solid #d1d5db;border-radius:12px;box-shadow:inset 0 1px 2px rgba(0,0,0,0.04)"></div>
<svg class="i" style="left:2112px;top:508px" width="16" height="16" viewBox="0 0 16 16" stroke="#4b5563" stroke-width="1.6"><line x1="2" y1="15" x2="15" y2="2"/><line x1="9" y1="15" x2="15" y2="9"/></svg>
<svg class="i" style="left:2174.00px;top:409.60px;" width="26" height="26" viewBox="0 0 24 24" fill="none" stroke="#4b5563" stroke-width="2" stroke-linecap="round" stroke-linejoin="round"><circle cx="12" cy="12" r="10"/><path d="M12 16v-4"/><path d="M12 8h.01"/></svg>
<div class="b" style="left:744px;top:672px;width:1474px;height:2px;background:#e5e7eb;"></div>
<div class="b" style="left:744px;top:669px;width:146px;height:4px;background:#374151;"></div>
<div class="t" style="left:776.60px;top:627.08px;font-size:28.25px;font-weight:700;color:#2d3748;font-family:'Liberation Sans', sans-serif;letter-spacing:-0.548px;">Graph</div>
<div class="t" style="left:922.80px;top:626.23px;font-size:29.25px;font-weight:700;color:#2d3748;font-family:'Liberation Sans', sans-serif;letter-spacing:-0.570px;">Details</div>
<div class="b" style="left:713px;top:708px;width:1026px;height:402px;background:#f3f4f6;"></div>
<div class="b" style="left:713px;top:707px;width:1026px;height:2px;background:#e5e7eb;"></div>
<div class="b" style="left:712px;top:707px;width:2px;height:403px;background:#e5e7eb;"></div>
<div class="t" style="left:714.00px;top:715.22px;font-size:29.5px;font-weight:400;color:#374151;font-family:'Liberation Sans', sans-serif;letter-spacing:0.075px;">Flow suspended, waiting for 1 events</div>
<div class="b" style="left:1560.6px;top:765.6px;width:46.59999999999991px;height:46.60000000000002px;background:#fff;border:2px solid #e5e7eb;border-radius:9px;"></div>
<svg class="i" style="left:1568.40px;top:773.50px;" width="31" height="31" viewBox="0 0 24 24" fill="none" stroke="#1f2937" stroke-width="2.2" stroke-linecap="round" stroke-linejoin="round"><path d="M5 12h14"/><path d="M12 5v14"/></svg>
<div class="b" style="left:1617.4px;top:765.6px;width:46.59999999999991px;height:46.60000000000002px;background:#fff;border:2px solid #e5e7eb;border-radius:9px;"></div>
<svg class="i" style="left:1625.20px;top:773.50px;" width="31" height="31" viewBox="0 0 24 24" fill="none" stroke="#1f2937" stroke-width="2.2" stroke-linecap="round" stroke-linejoin="round"><path d="M5 12h14"/></svg>
<div class="b" style="left:1674.3px;top:765.6px;width:46.59999999999991px;height:46.60000000000002px;background:#fff;border:2px solid #e5e7eb;border-radius:9px;"></div>
<svg class="i" style="left:1682.10px;top:773.50px;" width="31" height="31" viewBox="0 0 24 24" fill="none" stroke="#1f2937" stroke-width="2.2" stroke-linecap="round" stroke-linejoin="round"><path d="m21 21-6-6m6 6v-4.8m0 4.8h-4.8"/><path d="M3 16.2V21m0 0h4.8M3 21l6-6"/><path d="M21 7.8V3m0 0h-4.8M21 3l-6 6"/><path d="M3 7.8V3m0 0h4.8M3 3l6 6"/></svg>
<div class="b" style="left:1225px;top:900px;width:2px;height:102px;background:#9ca3af;"></div>
<div class="b" style="left:1225px;top:1068px;width:2px;height:42px;background:#9ca3af;"></div>
<div class="b" style="left:951.5px;top:833px;width:548.5px;height:67px;background:#e2e8f0;border:2px solid #9ca3af;border-radius:3px;box-shadow:0 1px 3px rgba(0,0,0,0.15)"></div>
<div class="t" style="left:1193.00px;top:855.57px;font-size:22.75px;font-weight:400;color:#2d3748;font-family:'Liberation Mono', monospace;letter-spacing:-0.565px;">Input</div>
<div class="t" style="left:1433.00px;top:974.23px;font-size:23px;font-weight:400;color:#4b5563;font-family:'Liberation Sans', sans-serif;letter-spacing:-0.412px;">0,053s</div>
<div class="b" style="left:951.5px;top:1002px;width:548.5px;height:66px;background:#ccfbd8;border:2px solid #9ca3af;border-radius:3px;box-shadow:0 1px 3px rgba(0,0,0,0.15)"></div>
<div class="t" style="left:1170.00px;top:1022.21px;font-size:23.25px;font-weight:400;color:#2d3748;font-family:'Liberation Sans', sans-serif;letter-spacing:-0.563px;">Inline Deno</div>
<div class="b" style="left:1436px;top:1015px;width:46.5px;height:39px;background:#e0e7ff;border-radius:8px;"></div>
<div class="t" style="left:1456.17px;top:1023.68px;font-size:24px;font-weight:700;color:#3730a3;font-family:'Liberation Sans', sans-serif;">I</div>
<div class="b" style="left:970px;top:1020px;width:30px;height:30px;background:#4479c4;border-radius:2px;"></div>
<div class="t" style="left:976.80px;top:1032.46px;font-size:18.0px;font-weight:700;color:#fff;font-family:'Liberation Sans', sans-serif;letter-spacing:-2.302px;">TS</div>
<svg class="i" style="left:987px;top:1006.5px" width="25" height="25" viewBox="0 0 25 25"><circle cx="12.5" cy="12.5" r="12.5" fill="#000"/><path d="M6.2 12.5 C6.2 9.6 9 7.7 12.6 7.7 C16.6 7.7 19.6 10.5 20.2 14 C20.8 18 21 21 19.5 23.6 C18 24.6 15.5 24.8 13.6 24.6 L13.6 19 C11.5 19 9 18.6 7.5 17.2 C6.6 16.2 6.2 14.5 6.2 12.5 Z" fill="#fff"/><circle cx="13.1" cy="10.5" r="1" fill="#000"/></svg>
<div class="b" style="left:687.5px;top:1027.5px;width:233.5px;height:65.5px;background:#fff;border:2px solid #e5e7eb;"></div>
<svg class="i" style="left:712.00px;top:1047.00px;" width="26" height="26" viewBox="0 0 24 24" fill="none" stroke="#374151" stroke-width="2" stroke-linecap="round" stroke-linejoin="round"><path d="M5 12h14"/></svg>
<div class="t" style="left:775.50px;top:1048.96px;font-size:22.25px;font-weight:400;color:#374151;font-family:'Liberation Sans', sans-serif;letter-spacing:-0.469px;">100%</div>
<div class="b" style="left:853px;top:1039px;width:59px;height:42px;background:#f9fafb;border-radius:10px;"></div>
<svg class="i" style="left:869.00px;top:1047.00px;" width="26" height="26" viewBox="0 0 24 24" fill="none" stroke="#374151" stroke-width="2" stroke-linecap="round" stroke-linejoin="round"><path d="M5 12h14"/><path d="M12 5v14"/></svg>
<div class="b" style="left:1739px;top:708px;width:512px;height:402px;background-color:#f7f8fa;background-image:radial-gradient(circle, #e0e1e4 2px, transparent 2.3px);background-size:32px 32px;background-position:-13.3px 6.1px"></div>
<div class="b" style="left:1739px;top:708px;width:512px;height:2px;background:#e5e7eb;"></div>
<div class="b" style="left:1738px;top:708px;width:3px;height:402px;background:#9ca3af;"></div>
<div class="b" style="left:2250px;top:708px;width:2px;height:402px;background:#e5e7eb;"></div>
<div class="t" style="left:1773.00px;top:730.02px;font-size:29.5px;font-weight:700;color:#2d3748;font-family:'Liberation Sans', sans-serif;letter-spacing:-0.591px;">Timeline</div>
<div class="t" style="left:1952.60px;top:730.02px;font-size:29.5px;font-weight:700;color:#2d3748;font-family:'Liberation Sans', sans-serif;letter-spacing:-0.584px;">Node status</div>
<div class="b" style="left:2180.9px;top:700px;width:70px;height:70px;overflow:hidden"><div class="t" style="left:0;top:29.6px;font-size:30px;font-weight:700;color:#2d3748;letter-spacing:-0.9px">Node</div></div>
<div class="b" style="left:1739px;top:777px;width:512px;height:2px;background:#e5e7eb;"></div>
<div class="b" style="left:1739px;top:773px;width:181px;height:4px;background:#374151;"></div>
<div class="b" style="left:1741px;top:780px;width:381px;height:5px;background:#9ca3af;border-radius:3px;"></div>
<div class="t" style="left:1812.00px;top:813.48px;font-size:24.0px;font-weight:400;color:#374151;font-family:'Liberation Sans', sans-serif;letter-spacing:-0.484px;">12:38:07 31/7</div>
<div class="t" style="left:2088.00px;top:816.37px;font-size:22.75px;font-weight:400;color:#374151;font-family:'Liberation Mono', monospace;letter-spacing:-0.427px;">70,385s</div>
<svg class="i" style="left:2190.00px;top:812.50px;" width="26" height="26" viewBox="0 0 24 24" fill="none" stroke="#4b5563" stroke-width="2" stroke-linecap="round" stroke-linejoin="round"><path d="M21 12a9 9 0 1 1-6.219-8.56"/></svg>
<div class="b" style="left:1741px;top:858px;width:509px;height:2px;background:#e5e7eb;"></div>
<div class="t" style="left:1756.50px;top:882.23px;font-size:25px;font-weight:400;color:#4b5563;font-family:'Liberation Sans', sans-serif;letter-spacing:-0.556px;">Waiting for</div>
<div class="t" style="left:1756.50px;top:922.64px;font-size:24.75px;font-weight:400;color:#4b5563;font-family:'Liberation Sans', sans-serif;letter-spacing:-0.568px;">executor/Suspend</div>
<div class="b" style="left:2025px;top:900px;width:26px;height:31px;background:#6b7280;"></div>
<div class="t" style="left:2084.00px;top:903.18px;font-size:24.0px;font-weight:400;color:#4b5563;font-family:'Liberation Sans', sans-serif;letter-spacing:-0.550px;">Execution</div>
<div class="b" style="left:2202px;top:900px;width:32px;height:31px;background:#5b8def;"></div>
<div class="b" style="left:1741px;top:970px;width:509px;height:2px;background:#e5e7eb;box-shadow:0 2px 4px rgba(0,0,0,0.05)"></div>
<div class="b" style="left:1759px;top:1002px;width:2px;height:22px;background:#1f2937;"></div>
<div class="t" style="left:1769.50px;top:1011.65px;font-size:22.25px;font-weight:700;color:#1f2937;font-family:'Liberation Mono', monospace;letter-spacing:-0.469px;">0,1s</div>
<div class="b" style="left:1851.5px;top:1006px;width:2.0px;height:32px;background:#5b8def;"></div>
<div class="b" style="left:1741px;top:1070px;width:509px;height:2px;background:#e5e7eb;box-shadow:0 2px 4px rgba(0,0,0,0.05)"></div>
<div class="t" style="left:1757.00px;top:1098.08px;font-size:26px;font-weight:400;color:#1f2937;font-family:'Liberation Mono', monospace;">k</div>
<div class="b" style="left:1851.5px;top:1102px;width:2.0px;height:8px;background:#5b8def;"></div>
<div class="b" style="left:670px;top:1110px;width:1636px;height:2px;background:#e5e7eb;"></div>
<div class="b" style="left:670px;top:1112px;width:1636px;height:442px;background:#fff;"></div>
<div class="b" style="left:1078px;top:1112px;width:2px;height:442px;background:#e5e7eb;"></div>
<div class="t" style="left:694.30px;top:1148.28px;font-size:24px;font-weight:700;color:#2d3748;font-family:'Liberation Sans', sans-serif;letter-spacing:-0.211px;">Runnables</div>
<svg class="i" style="left:1015.00px;top:1144.50px;" width="30" height="30" viewBox="0 0 24 24" fill="none" stroke="#d1d5db" stroke-width="1.6" stroke-linecap="round" stroke-linejoin="round"><path d="M4 19.5v-15A2.5 2.5 0 0 1 6.5 2H20v20H6.5a2.5 2.5 0 0 1 0-5H20"/><path d="M8 7h6"/><path d="M8 11h8"/></svg>
<div class="t" style="left:694.30px;top:1209.44px;font-size:27px;font-weight:400;color:#4b5563;font-family:'Liberation Sans', sans-serif;letter-spacing:-0.436px;">No scripts/flows</div>
<div class="t" style="left:694.30px;top:1299.54px;font-size:24.75px;font-weight:700;color:#4b5563;font-family:'Liberation Sans', sans-serif;letter-spacing:-0.555px;">Background runnables</div>
<svg class="i" style="left:966.00px;top:1296.50px;" width="26" height="26" viewBox="0 0 24 24" fill="none" stroke="#4b5563" stroke-width="2" stroke-linecap="round" stroke-linejoin="round"><circle cx="12" cy="12" r="10"/><path d="M12 16v-4"/><path d="M12 8h.01"/></svg>
<div class="b" style="left:1007px;top:1289px;width:46px;height:46px;border-radius:50%;border:2px solid #e5e7eb;background:#fff"></div>
<svg class="i" style="left:1016.00px;top:1298.00px;" width="28" height="28" viewBox="0 0 24 24" fill="none" stroke="#2d3748" stroke-width="2" stroke-linecap="round" stroke-linejoin="round"><path d="M5 12h14"/><path d="M12 5v14"/></svg>
<div class="b" style="left:694.5px;top:1344.5px;width:359.0px;height:58.5px;background:#fff;border:2px solid #e5e7eb;border-radius:4px;"></div>
<div class="t" style="left:712.30px;top:1361.28px;font-size:24.0px;font-weight:400;color:#2d3748;font-family:'Liberation Sans', sans-serif;letter-spacing:-0.583px;">Background Runna...</div>
<div class="b" style="left:939.5px;top:1354px;width:96.0px;height:39.5px;background:#e0e7ff;border-radius:8px;"></div>
<div class="t" style="left:960.00px;top:1363.47px;font-size:24.25px;font-weight:700;color:#3730a3;font-family:'Liberation Sans', sans-serif;letter-spacing:-0.534px;">bg_0</div>
<div class="b" style="left:2306px;top:74px;width:574px;height:1480px;background:#fff;"></div>
<div class="b" style="left:2306px;top:74px;width:2px;height:1480px;background:#e5e7eb;"></div>
<svg class="i" style="left:2348.00px;top:95.00px;" width="36" height="36" viewBox="0 0 24 24" fill="none" stroke="#2d3748" stroke-width="1.9" stroke-linecap="round" stroke-linejoin="round"><path d="M5 12h14"/><path d="M12 5v14"/></svg>
<svg class="i" style="left:2464.00px;top:95.00px;" width="36" height="36" viewBox="0 0 24 24" fill="none" stroke="#2d3748" stroke-width="1.9" stroke-linecap="round" stroke-linejoin="round"><path d="M5.5 8.5 9 12l-3.5 3.5L2 12l3.5-3.5Z"/><path d="m12 2 3.5 3.5L12 9 8.5 5.5 12 2Z"/><path d="M18.5 8.5 22 12l-3.5 3.5L15 12l3.5-3.5Z"/><path d="m12 15 3.5 3.5L12 22l-3.5-3.5L12 15Z"/></svg>
<svg class="i" style="left:2580.00px;top:95.00px;" width="36" height="36" viewBox="0 0 24 24" fill="none" stroke="#2d3748" stroke-width="1.9" stroke-linecap="round" stroke-linejoin="round"><path d="M18.37 2.63 14 7l-1.59-1.59a2 2 0 0 0-2.82 0L8 7l9 9 1.59-1.59a2 2 0 0 0 0-2.82L17 10l4.37-4.37a2.12 2.12 0 1 0-3-3Z"/><path d="M9 8c-2 3-4 3.5-7 4l8 10c2-1 6-5 6-7"/><path d="M14.5 17.5 4.5 15"/></svg>
<div class="b" style="left:2308px;top:156px;width:572px;height:2px;background:#e5e7eb;"></div>
<div class="b" style="left:2424px;top:152px;width:116px;height:4px;background:#374151;"></div>
<div class="b" style="left:2308px;top:158px;width:572px;height:64px;background:#f3f4f6;"></div>
<div class="t" style="left:2333.00px;top:177.98px;font-size:24px;font-weight:700;color:#2d3748;font-family:'Liberation Sans', sans-serif;letter-spacing:-0.034px;">Flow Status by Job Id</div>
<svg class="i" style="left:2817.00px;top:174.50px;" width="30" height="30" viewBox="0 0 24 24" fill="none" stroke="#d1d5db" stroke-width="1.6" stroke-linecap="round" stroke-linejoin="round"><path d="M4 19.5v-15A2.5 2.5 0 0 1 6.5 2H20v20H6.5a2.5 2.5 0 0 1 0-5H20"/><path d="M8 7h6"/><path d="M8 11h8"/></svg>
<div class="t" style="left:2333.00px;top:249.68px;font-size:24px;font-weight:700;color:#2d3748;font-family:'Liberation Sans', sans-serif;letter-spacing:0.058px;">Configuration</div>
<div class="t" style="left:2333.00px;top:314.53px;font-size:23px;font-weight:700;color:#2d3748;font-family:'Liberation Sans', sans-serif;letter-spacing:-0.544px;">Job Id</div>
<svg class="i" style="left:2403.00px;top:313.50px;" width="24" height="24" viewBox="0 0 24 24" fill="none" stroke="#4b5563" stroke-width="2" stroke-linecap="round" stroke-linejoin="round"><circle cx="12" cy="12" r="10"/><path d="M12 16v-4"/><path d="M12 8h.01"/></svg>
<div class="b" style="left:2624px;top:294px;width:136px;height:55.5px;background:#f3f4f6;border-radius:12px;"></div>
<div class="b" style="left:2628px;top:297.5px;width:60px;height:48.0px;background:#fff;border-radius:10px;box-shadow:0 2px 4px rgba(0,0,0,0.12)"></div>
<svg class="i" style="left:2645.00px;top:308.50px;" width="26" height="26" viewBox="0 0 24 24" fill="none" stroke="#3b82f6" stroke-width="2" stroke-linecap="round" stroke-linejoin="round"><path d="M17 3a2.85 2.83 0 1 1 4 4L7.5 20.5 2 22l1.5-5.5Z"/></svg>
<svg class="i" style="left:2713.00px;top:309.00px;" width="26" height="26" viewBox="0 0 24 24" fill="none" stroke="#9ca3af" stroke-width="2" stroke-linecap="round" stroke-linejoin="round"><rect width="18" height="18" x="3" y="3" rx="2" ry="2"/><path d="M9 17c2 0 2.8-1 2.8-2.8V10c0-2 1-3.3 3.2-3"/><path d="M9 11.2h5.7"/></svg>
<div class="b" style="left:2776.5px;top:294px;width:78.5px;height:55.5px;background:#fff;border:2px solid #e5e7eb;border-radius:12px;"></div>
<svg class="i" style="left:2802.50px;top:309.00px;" width="26" height="26" viewBox="0 0 24 24" fill="none" stroke="#2d3748" stroke-width="2" stroke-linecap="round" stroke-linejoin="round"><path d="M12 22v-5"/><path d="M9 8V2"/><path d="M15 8V2"/><path d="M18 8v5a4 4 0 0 1-4 4h-4a4 4 0 0 1-4-4V8Z"/></svg>
<div class="b" style="left:2333px;top:359px;width:522px;height:114px;background:#fff;border:2px solid #d1d5db;border-radius:12px;box-shadow:0 1px 2px rgba(0,0,0,0.05)"></div>
<div class="t" style="left:2351.00px;top:376.67px;font-size:28.5px;font-weight:400;color:#2d3748;font-family:'Liberation Sans', sans-serif;letter-spacing:0.867px;text-decoration:underline dotted #ef4444;text-decoration-thickness:3px;text-underline-offset:6px;">0191085e-5baa-81ef-4774-</div>
<div class="t" style="left:2351.00px;top:424.67px;font-size:28.5px;font-weight:400;color:#2d3748;font-family:'Liberation Sans', sans-serif;letter-spacing:1.296px;text-decoration:underline dotted #ef4444;text-decoration-thickness:3px;text-underline-offset:6px;">c9ef4f0a92d2</div>
<svg class="i" style="left:2836px;top:454px" width="16" height="16" viewBox="0 0 16 16" stroke="#4b5563" stroke-width="1.6"><line x1="2" y1="15" x2="15" y2="2"/><line x1="9" y1="15" x2="15" y2="9"/></svg>
<div class="b" style="left:2308px;top:497px;width:572px;height:2px;background:#e5e7eb;"></div>
<div class="b" style="left:2308px;top:1035px;width:572px;height:2px;background:#e5e7eb;"></div>
<div class="t" style="left:2333.00px;top:1080.38px;font-size:24px;font-weight:700;color:#2d3748;font-family:'Liberation Sans', sans-serif;letter-spacing:-0.001px;">Styling</div>
<div class="b" style="left:2692px;top:1063px;width:163px;height:58px;background:#fff;border:2px solid #e5e7eb;border-radius:12px;"></div>
<svg class="i" style="left:2720.50px;top:1079.00px;" width="26" height="26" viewBox="0 0 24 24" fill="none" stroke="#2d3748" stroke-width="2" stroke-linecap="round" stroke-linejoin="round"><path d="m15 18-6-6 6-6"/></svg>
<div class="t" style="left:2765.70px;top:1079.96px;font-size:24.5px;font-weight:700;color:#2d3748;font-family:'Liberation Sans', sans-serif;letter-spacing:-0.444px;">Show</div>
<div class="t" style="left:2333.00px;top:1142.98px;font-size:24px;font-weight:400;color:#2d3748;font-family:'Liberation Sans', sans-serif;letter-spacing:-0.373px;">Full height</div>
<div class="b" style="left:2457px;top:1139px;width:56px;height:32px;background:#d1d5db;border-radius:16px;"></div>
<div class="b" style="left:2460px;top:1142px;width:26px;height:26px;border-radius:50%;background:#fff"></div>
<div class="t" style="left:2530.00px;top:1142.13px;font-size:25px;font-weight:400;color:#2d3748;font-family:'Liberation Sans', sans-serif;letter-spacing:0.548px;-webkit-text-stroke:0.5px currentColor;">Desktop</div>
<div class="b" style="left:2641.5px;top:1139px;width:55.5px;height:32px;background:#d1d5db;border-radius:16px;"></div>
<div class="b" style="left:2644.5px;top:1142px;width:26px;height:26px;border-radius:50%;background:#fff"></div>
<div class="t" style="left:2713.70px;top:1142.13px;font-size:25px;font-weight:400;color:#2d3748;font-family:'Liberation Sans', sans-serif;letter-spacing:0.470px;-webkit-text-stroke:0.5px currentColor;">Mobile</div>
<div class="b" style="left:2308px;top:1196px;width:572px;height:2px;background:#e5e7eb;"></div>
<div class="t" style="left:2333.00px;top:1239.68px;font-size:24px;font-weight:700;color:#2d3748;font-family:'Liberation Sans', sans-serif;letter-spacing:0.373px;">Copy/Move</div>
<div class="b" style="left:2653px;top:1223px;width:202.5px;height:58px;background:#fff;border:2px solid #e88080;border-radius:12px;"></div>
<div class="t" style="left:2678.50px;top:1238.41px;font-size:25.5px;font-weight:700;color:#dc2626;font-family:'Liberation Sans', sans-serif;letter-spacing:-0.508px;">Delete</div>
<div class="t" style="left:2770.00px;top:1237.99px;font-size:26px;font-weight:400;color:#f08a8a;font-family:'Liberation Sans', sans-serif;letter-spacing:0.829px;">⌘Del</div>
<div class="t" style="left:2333.00px;top:1311.83px;font-size:25px;font-weight:400;color:#4b5563;font-family:'Liberation Sans', sans-serif;letter-spacing:-0.077px;">Copy:</div>
<div class="b" style="left:2593px;top:1299px;width:68px;height:50px;background:#fff;border:2px solid #e5e7eb;border-radius:10px;"></div>
<div class="t" style="left:2608.60px;top:1312.33px;font-size:25px;font-weight:400;color:#4b5563;font-family:'Liberation Sans', sans-serif;">⌘C</div>
<svg class="i" style="left:2668.00px;top:1311.00px;" width="26" height="26" viewBox="0 0 24 24" fill="none" stroke="#4b5563" stroke-width="2" stroke-linecap="round" stroke-linejoin="round"><path d="M5 12h14"/><path d="m12 5 7 7-7 7"/></svg>
<div class="b" style="left:2702px;top:1299px;width:66.5px;height:50px;background:#fff;border:2px solid #e5e7eb;border-radius:10px;"></div>
<div class="t" style="left:2717.54px;top:1312.33px;font-size:25px;font-weight:400;color:#4b5563;font-family:'Liberation Sans', sans-serif;">⌘V</div>
<div class="t" style="left:2333.00px;top:1371.43px;font-size:25px;font-weight:400;color:#4b5563;font-family:'Liberation Sans', sans-serif;letter-spacing:-0.020px;">Move:</div>
<div class="b" style="left:2593px;top:1359px;width:66px;height:50px;background:#fff;border:2px solid #e5e7eb;border-radius:10px;"></div>
<div class="t" style="left:2608.29px;top:1372.33px;font-size:25px;font-weight:400;color:#4b5563;font-family:'Liberation Sans', sans-serif;">⌘X</div>
<svg class="i" style="left:2666.00px;top:1371.00px;" width="26" height="26" viewBox="0 0 24 24" fill="none" stroke="#4b5563" stroke-width="2" stroke-linecap="round" stroke-linejoin="round"><path d="M5 12h14"/><path d="m12 5 7 7-7 7"/></svg>
<div class="b" style="left:2700px;top:1359px;width:66.5px;height:50px;background:#fff;border:2px solid #e5e7eb;border-radius:10px;"></div>
<div class="t" style="left:2715.54px;top:1372.33px;font-size:25px;font-weight:400;color:#4b5563;font-family:'Liberation Sans', sans-serif;">⌘V</div>
<div class="t" style="left:2333.00px;top:1431.83px;font-size:25px;font-weight:400;color:#4b5563;font-family:'Liberation Sans', sans-serif;letter-spacing:0.048px;">Navigate:</div>
<div class="b" style="left:2593px;top:1419px;width:49.5px;height:50px;background:#fff;border:2px solid #e5e7eb;border-radius:10px;"></div>
<svg class="i" style="left:2604.75px;top:1431.00px;" width="26" height="26" viewBox="0 0 24 24" fill="none" stroke="#4b5563" stroke-width="2" stroke-linecap="round" stroke-linejoin="round"><path d="m12 19-7-7 7-7"/><path d="M19 12H5"/></svg>
<div class="b" style="left:2652px;top:1419px;width:49px;height:50px;background:#fff;border:2px solid #e5e7eb;border-radius:10px;"></div>
<svg class="i" style="left:2663.50px;top:1431.00px;" width="26" height="26" viewBox="0 0 24 24" fill="none" stroke="#4b5563" stroke-width="2" stroke-linecap="round" stroke-linejoin="round"><path d="m5 12 7-7 7 7"/><path d="M12 19V5"/></svg>
<div class="b" style="left:2711px;top:1419px;width:49px;height:50px;background:#fff;border:2px solid #e5e7eb;border-radius:10px;"></div>
<svg class="i" style="left:2722.50px;top:1431.00px;" width="26" height="26" viewBox="0 0 24 24" fill="none" stroke="#4b5563" stroke-width="2" stroke-linecap="round" stroke-linejoin="round"><path d="M5 12h14"/><path d="m12 5 7 7-7 7"/></svg>
<div class="b" style="left:2770px;top:1419px;width:73px;height:50px;background:#fff;border:2px solid #e5e7eb;border-radius:10px;"></div>
<div class="t" style="left:2780.80px;top:1432.33px;font-size:25px;font-weight:400;color:#4b5563;font-family:'Liberation Sans', sans-serif;">ESC</div>
<div class="t" style="left:2333.00px;top:1491.83px;font-size:25px;font-weight:400;color:#4b5563;font-family:'Liberation Sans', sans-serif;letter-spacing:0.322px;">Add to selection:</div>
<div class="b" style="left:2593px;top:1480px;width:54.5px;height:48px;background:#fff;border:2px solid #e5e7eb;border-radius:10px;"></div>
<svg class="i" style="left:2606.25px;top:1490.00px;" width="28" height="28" viewBox="0 0 24 24" fill="none" stroke="#4b5563" stroke-width="1.8" stroke-linecap="round" stroke-linejoin="round"><path d="M9 18v-6H5l7-7 7 7h-4v6H9z"/></svg>
<svg class="i" style="left:2655.50px;top:1495.00px;" width="22" height="22" viewBox="0 0 24 24" fill="none" stroke="#4b5563" stroke-width="2.4" stroke-linecap="round" stroke-linejoin="round"><path d="M5 12h14"/><path d="M12 5v14"/></svg>
<div class="b" style="left:2686px;top:1479px;width:82.5px;height:50px;background:#fff;border:2px solid #e5e7eb;border-radius:10px;"></div>
<div class="t" style="left:2700.17px;top:1492.33px;font-size:25px;font-weight:400;color:#4b5563;font-family:'Liberation Sans', sans-serif;">Click</div>
</body></html>
